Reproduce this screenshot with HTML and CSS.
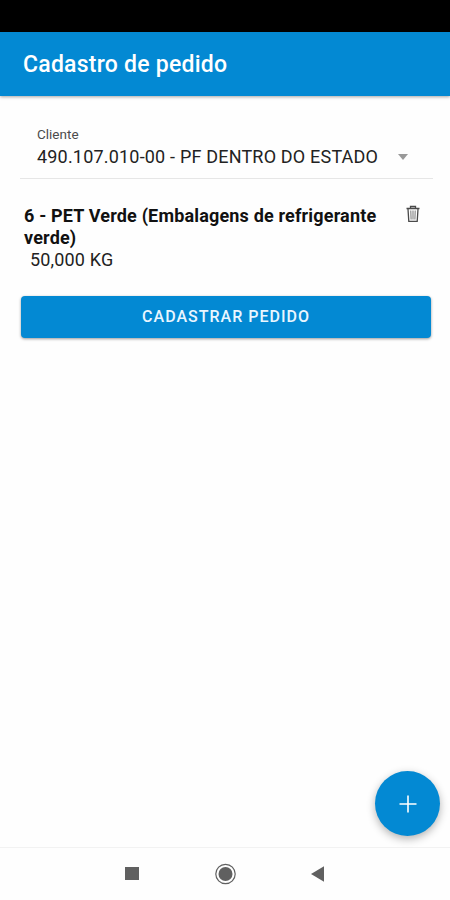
FILE: index.html
```html
<!DOCTYPE html>
<html lang="pt-BR">
<head>
    <meta charset="UTF-8">
    <meta name="viewport" content="width=device-width, initial-scale=1.0">
    <title>Cadastro de pedido</title>
    <link rel="stylesheet" href="styles.css">
</head>
<body>
    <div class="status-bar"></div>

    <header class="toolbar">
        <h1 class="toolbar-title">Cadastro de pedido</h1>
    </header>

    <main class="content">
        <div class="select-field">
            <div class="select-text">
                <div class="select-label">Cliente</div>
                <div class="select-value">490.107.010-00 - PF DENTRO DO ESTADO</div>
            </div>
            <div class="select-arrow"></div>
        </div>

        <div class="order-item">
            <div class="item-info">
                <div class="item-name">6 - PET Verde (Embalagens de refrigerante verde)</div>
                <div class="item-amount">50,000 KG</div>
            </div>
            <button class="delete-button" aria-label="Remover">
                <svg width="14" height="18" viewBox="0 0 14 18" fill="none" stroke="#4a4a4a">
                    <path d="M0.5 3.5h13M4.5 3.2V1.5h5v1.7" stroke-width="1.3"/>
                    <path d="M2 4l.8 12.4h8.4L12 4" stroke-width="1.3"/>
                    <path d="M4.8 5.5l.3 9M7 5.5v9M9.2 5.5l-.3 9" stroke="#777" stroke-width="1"/>
                </svg>
            </button>
        </div>

        <button class="submit-button">Cadastrar pedido</button>
    </main>

    <button class="fab" aria-label="Adicionar">
        <svg width="18" height="18" viewBox="0 0 18 18" stroke="#fff" stroke-width="1.6">
            <path d="M9 0.5v17M0.5 9h17"/>
        </svg>
    </button>

    <footer class="nav-bar">
        <svg class="nav-icon" width="24" height="24" viewBox="0 0 24 24" fill="#606060">
            <rect x="5" y="5" width="14" height="13"/>
        </svg>
        <svg class="nav-icon" width="24" height="24" viewBox="0 0 24 24">
            <circle cx="12.5" cy="12" r="9.7" fill="none" stroke="#606060" stroke-width="1.2"/>
            <circle cx="12.5" cy="12" r="7" fill="#606060"/>
        </svg>
        <svg class="nav-icon" width="24" height="24" viewBox="0 0 24 24" fill="#606060">
            <path d="M5 12l13-7.8v15.6z"/>
        </svg>
    </footer>
</body>
</html>
```

FILE: styles.css
```css
* {
    margin: 0;
    padding: 0;
    box-sizing: border-box;
    font-family: Roboto, sans-serif;
}

body {
    display: flex;
    flex-direction: column;
    height: 100vh;
    background-color: #fefefe;
    color: #222;
    overflow: hidden;
}

button {
    border: none;
    cursor: pointer;
}

.status-bar {
    height: 32px;
    background-color: #000;
}

.toolbar {
    display: flex;
    align-items: center;
    height: 64px;
    padding: 0 23px;
    background-color: #0389d3;
    box-shadow: 0 1px 3px rgba(0, 0, 0, 0.35);
}

.toolbar-title {
    color: #fff;
    font-size: 23px;
    font-weight: 500;
    letter-spacing: 0.24px;
}

.content {
    flex: 1;
    padding: 24px 17px 0 20px;
}

.select-field {
    display: flex;
    align-items: flex-end;
    height: 59px;
    padding: 0 25px 9px 17px;
    border-bottom: 1px solid #e6e6e6;
}

.select-text {
    flex: 1;
}

.select-label {
    font-size: 13.5px;
    line-height: 22px;
    color: #4c4c4c;
}

.select-value {
    font-size: 18px;
    line-height: 24px;
    letter-spacing: 0.19px;
    white-space: nowrap;
}

.select-arrow {
    margin-bottom: 9px;
    border: 5px solid transparent;
    border-top: 6px solid #999;
    border-bottom: none;
}

.order-item {
    display: flex;
    justify-content: space-between;
    padding: 26px 13px 0 4px;
    font-size: 18px;
    line-height: 22px;
    letter-spacing: 0.17px;
}

.item-info {
    width: 360px;
}

.item-name {
    color: #111;
    font-weight: 700;
}

.item-amount {
    padding-left: 6px;
}

.delete-button {
    width: 14px;
    height: 18px;
    background: none;
}

.delete-button svg {
    display: block;
}

.submit-button {
    display: block;
    width: 410px;
    height: 42px;
    margin: 25px 0 0 1px;
    padding-bottom: 2px;
    border-radius: 4px;
    background-color: #0389d3;
    box-shadow: 0 1px 3px rgba(0, 0, 0, 0.4);
    color: #e9f6ff;
    font-size: 16px;
    font-weight: 500;
    letter-spacing: 1px;
    text-transform: uppercase;
}

/* floating action button */
.fab {
    position: absolute;
    right: 10px;
    bottom: 64px;
    display: flex;
    justify-content: center;
    align-items: center;
    width: 65px;
    height: 65px;
    border-radius: 50%;
    background-color: #0389d3;
    box-shadow: 0 3px 9px rgba(0, 0, 0, 0.3);
}

.nav-bar {
    display: flex;
    justify-content: center;
    align-items: center;
    gap: 69px;
    height: 53px;
    border-top: 1px solid #f2f2f2;
}
```
